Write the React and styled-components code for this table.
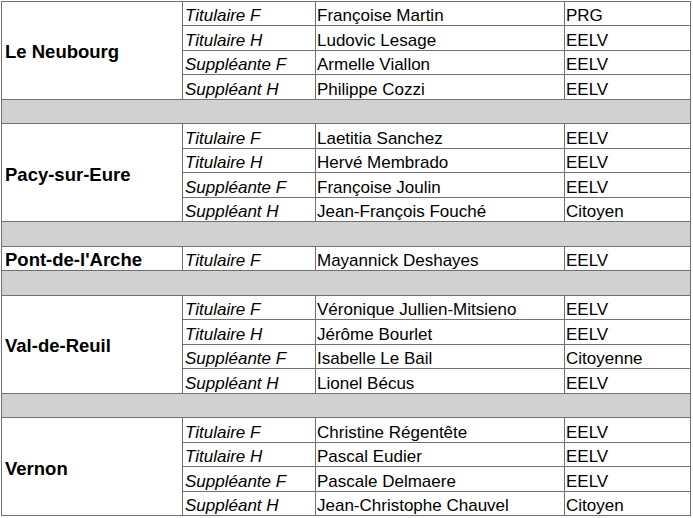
import React from 'react';
import styled, { createGlobalStyle } from 'styled-components';

const GlobalStyle = createGlobalStyle`
  html, body {
    margin: 0;
    padding: 0;
    background: #ffffff;
  }
  body {
    font-family: 'Liberation Sans', Arial, sans-serif;
    color: #000;
  }
`;

const Page = styled.div`
  padding: 1px 0 0 1px;
`;

const Sheet = styled.div`
  display: grid;
  width: 690px;
  height: 515px;
  box-sizing: border-box;
  grid-template-columns: 180px 132px 248px 125px;
  grid-template-rows: repeat(21, 1fr);
  gap: 1px;
  padding: 1px;
  background: #707070;
`;

const Cell = styled.div`
  background: #ffffff;
  display: flex;
  align-items: flex-end;
  font-size: 17px;
  line-height: 18px;
  white-space: nowrap;
  overflow: hidden;
  padding-left: ${(props) => props.$pad || 1}px;
`;

const CityCell = styled(Cell)`
  grid-row: span ${(props) => props.$span};
  align-items: center;
  font-size: 18.5px;
  font-weight: bold;
  padding-left: 3px;
  padding-top: 4px;
`;

const RoleCell = styled(Cell)`
  font-style: italic;
`;

const Spacer = styled.div`
  grid-column: 1 / -1;
  background: #d1d1d1;
`;

const groups = [
  {
    city: 'Le Neubourg',
    rows: [
      ['Titulaire F', 'Françoise Martin', 'PRG'],
      ['Titulaire H', 'Ludovic Lesage', 'EELV'],
      ['Suppléante F', 'Armelle Viallon', 'EELV'],
      ['Suppléant H', 'Philippe Cozzi', 'EELV'],
    ],
  },
  {
    city: 'Pacy-sur-Eure',
    rows: [
      ['Titulaire F', 'Laetitia Sanchez', 'EELV'],
      ['Titulaire H', 'Hervé Membrado', 'EELV'],
      ['Suppléante F', 'Françoise Joulin', 'EELV'],
      ['Suppléant H', 'Jean-François Fouché', 'Citoyen'],
    ],
  },
  {
    city: "Pont-de-l'Arche",
    rows: [['Titulaire F', 'Mayannick Deshayes', 'EELV']],
  },
  {
    city: 'Val-de-Reuil',
    rows: [
      ['Titulaire F', 'Véronique Jullien-Mitsieno', 'EELV'],
      ['Titulaire H', 'Jérôme Bourlet', 'EELV'],
      ['Suppléante F', 'Isabelle Le Bail', 'Citoyenne'],
      ['Suppléant H', 'Lionel Bécus', 'EELV'],
    ],
  },
  {
    city: 'Vernon',
    rows: [
      ['Titulaire F', 'Christine Régentête', 'EELV'],
      ['Titulaire H', 'Pascal Eudier', 'EELV'],
      ['Suppléante F', 'Pascale Delmaere', 'EELV'],
      ['Suppléant H', 'Jean-Christophe Chauvel', 'Citoyen'],
    ],
  },
];

function Group({ group }) {
  return (
    <>
      {group.rows.map(([role, name, party], i) => (
        <React.Fragment key={role}>
          {i === 0 && <CityCell $span={group.rows.length}>{group.city}</CityCell>}
          <RoleCell $pad={2}>{role}</RoleCell>
          <Cell>{name}</Cell>
          <Cell>{party}</Cell>
        </React.Fragment>
      ))}
    </>
  );
}

export default function App() {
  return (
    <Page>
      <GlobalStyle />
      <Sheet>
        {groups.map((group, i) => (
          <React.Fragment key={group.city}>
            {i > 0 && <Spacer />}
            <Group group={group} />
          </React.Fragment>
        ))}
      </Sheet>
    </Page>
  );
}
